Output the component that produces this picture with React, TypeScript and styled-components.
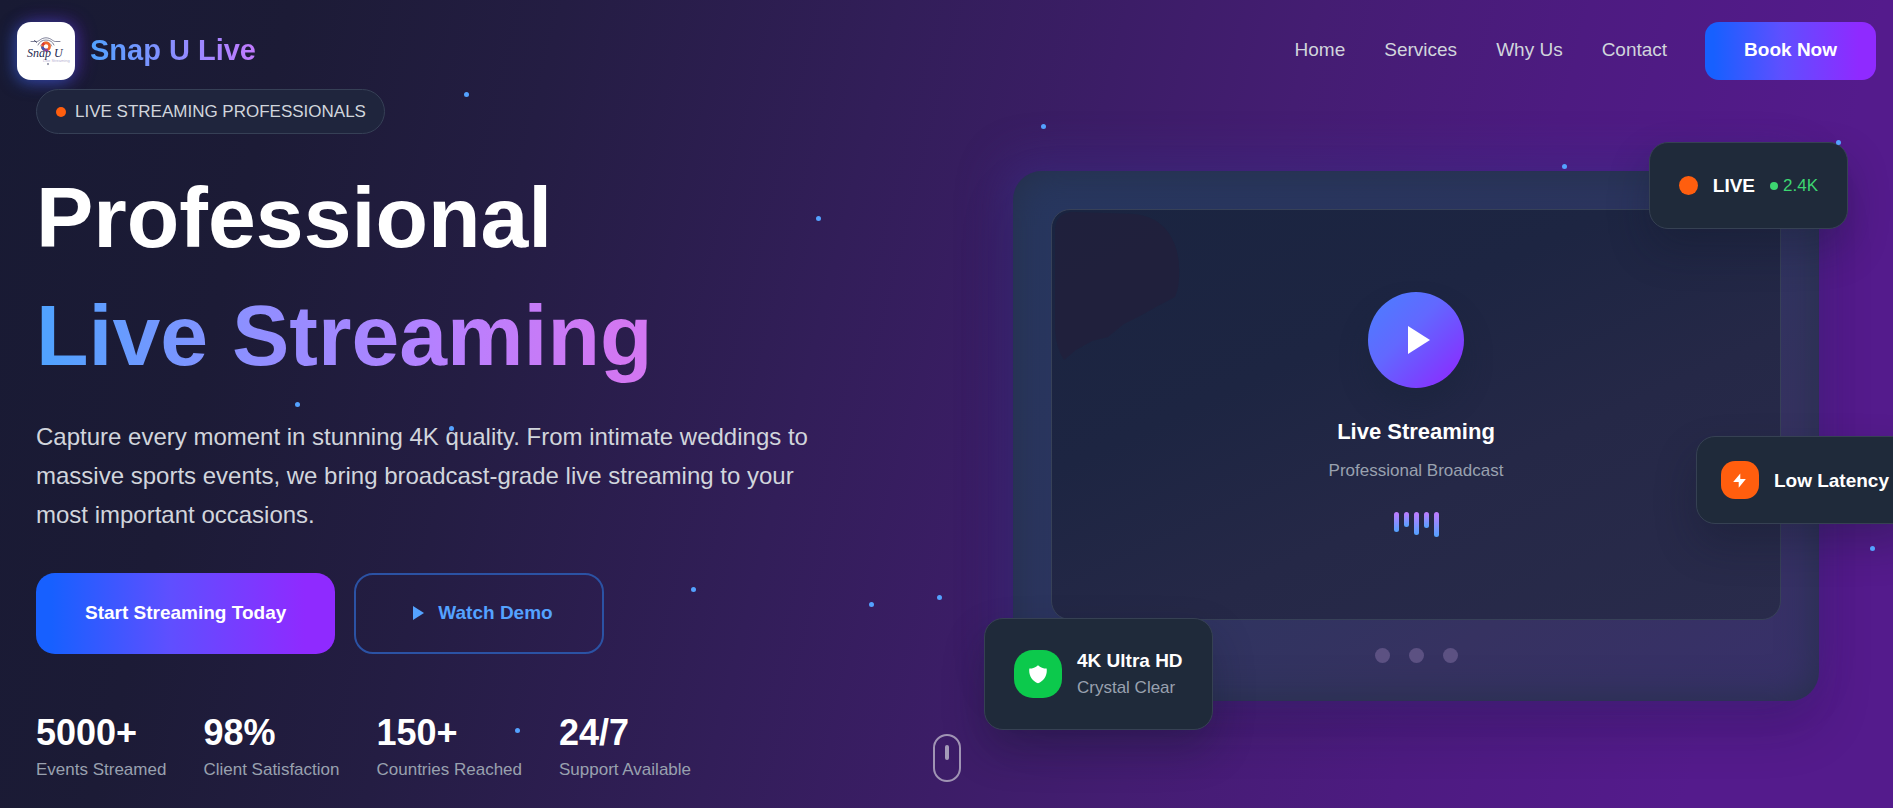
import React from 'react';
import styled, { createGlobalStyle } from 'styled-components';

const GlobalStyle = createGlobalStyle`
  * { box-sizing: border-box; }
  body {
    margin: 0;
    background: #191a32;
    color: #ffffff;
    font-family: "Liberation Sans", Arial, sans-serif;
    font-size: 19px;
    line-height: 29px;
  }
  h1, h2, p, dl, dd, dt, ul { margin: 0; padding: 0; }
  button { font: inherit; cursor: pointer; }
`;

const blueToPurple = 'linear-gradient(90deg, #1760ff 5%, #5f4fff 45%, #8f2aff 90%)';

const Page = styled.div`
  position: relative;
  display: flex;
  flex-direction: column;
  min-height: 100vh;
  overflow: hidden;
  background: linear-gradient(
    104deg,
    #181a33 0%,
    #1c1b36 14%,
    #241d43 27%,
    #321e59 43%,
    #3c1d67 54%,
    #441d72 63%,
    #4d1b81 76%,
    #541b8c 90%
  );
`;

const Header = styled.header`
  display: flex;
  align-items: center;
  justify-content: space-between;
  padding: 22px 17px 9px;
`;

const Brand = styled.a`
  display: flex;
  align-items: center;
  gap: 15px;
  text-decoration: none;
`;

const LogoTile = styled.span`
  display: block;
  width: 58px;
  height: 58px;
  border-radius: 14px;
  background: #ffffff;
  box-shadow:
    -3px 3px 16px rgba(43, 110, 220, 0.5),
    4px -1px 18px rgba(110, 30, 200, 0.45);
`;

const BrandName = styled.span`
  padding-bottom: 3px;
  font-size: 29px;
  line-height: 38px;
  font-weight: 700;
  color: transparent;
  background: linear-gradient(90deg, #51a2ff, #c27aff);
  background-clip: text;
`;

const Nav = styled.nav`
  display: flex;
  align-items: center;
  gap: 39px;
`;

const NavLink = styled.a`
  padding-bottom: 3px;
  color: #d1d5dc;
  text-decoration: none;
`;

const BookButton = styled.button`
  height: 58px;
  margin-left: -1px;
  padding: 0 39px 3px;
  border: 0;
  border-radius: 14px;
  color: #ffffff;
  font-weight: 700;
  background: ${blueToPurple};
`;

const Hero = styled.main`
  flex: 1;
  display: grid;
  grid-template-columns: minmax(0, 1fr) minmax(0, 1fr);
  align-items: center;
  gap: 77px;
  padding: 0 36px 22px;
`;

const Intro = styled.section`
  display: flex;
  flex-direction: column;
  align-items: flex-start;
`;

const Badge = styled.p`
  display: flex;
  align-items: center;
  gap: 9px;
  height: 45px;
  padding: 0 18px 0 19px;
  border: 1px solid #364056;
  border-radius: 23px;
  background: #1f253d;
  color: #d1d5dc;
  font-size: 17px;
`;

const Dot = styled.span<{ $size: number; $color: string }>`
  flex: none;
  width: ${(p) => p.$size}px;
  height: ${(p) => p.$size}px;
  border-radius: 50%;
  background: ${(p) => p.$color};
`;

const Title = styled.h1`
  display: flex;
  flex-direction: column;
  align-items: flex-start;
  margin-top: 24px;
  font-size: 86px;
  line-height: 118px;
  font-weight: 700;
`;

const TitleAccent = styled.span`
  color: transparent;
  background: linear-gradient(90deg, #51a2ff 2%, #8f8fff 35%, #b780ff 66%, #d277f2 94%);
  background-clip: text;
`;

const Lead = styled.p`
  max-width: 806px;
  margin-top: 23px;
  color: #d1d5dc;
  font-size: 24px;
  line-height: 39px;
`;

const Actions = styled.div`
  display: flex;
  gap: 19px;
  margin-top: 39px;
`;

const ActionButton = styled.button<{ $outline?: boolean }>`
  display: flex;
  align-items: center;
  gap: 9px;
  height: 81px;
  padding: 0 49px 2px;
  border: ${(p) => (p.$outline ? '2px solid #2b52a4' : '0')};
  border-radius: 19px;
  color: ${(p) => (p.$outline ? '#54a2ff' : '#ffffff')};
  background: ${(p) => (p.$outline ? 'transparent' : blueToPurple)};
  font-weight: 700;
`;

const Stats = styled.dl`
  display: flex;
  gap: 37px;
  margin-top: 57px;
`;

const Stat = styled.div`
  display: flex;
  flex-direction: column-reverse;
`;

const StatValue = styled.dd`
  font-size: 36px;
  line-height: 43px;
  font-weight: 700;
`;

const StatLabel = styled.dt`
  color: #99a1af;
  font-size: 17px;
  line-height: 32px;
`;

const Stage = styled.section`
  padding: 0 38px 3px 28px;
`;

const Device = styled.div`
  position: relative;
  padding: 38px;
  border-radius: 29px;
  background: linear-gradient(145deg, #27375f 0%, #2c355f 42%, #363261 72%, #38306a 100%);
  box-shadow:
    inset 0 0 38px #253049,
    -12px -12px 44px rgba(60, 52, 145, 0.4),
    0 26px 52px rgba(20, 20, 40, 0.22);
`;

const Screen = styled.div`
  position: relative;
  display: flex;
  flex-direction: column;
  align-items: center;
  justify-content: center;
  aspect-ratio: 16 / 9;
  border: 1px solid #374158;
  border-radius: 19px;
  overflow: hidden;
  background: linear-gradient(155deg, #1a2440 0%, #1d2542 35%, #252847 62%, #292b4b 100%);
`;

const Tint = styled.svg`
  position: absolute;
  top: 0;
  left: 0;
`;

const PlayButton = styled.button`
  display: grid;
  place-items: center;
  width: 96px;
  height: 96px;
  padding: 0;
  border: 0;
  border-radius: 50%;
  color: #ffffff;
  background: linear-gradient(135deg, #4f7aff 10%, #6268ff 42%, #7549ff 68%, #8c2cff 92%);
  box-shadow: 0 18px 28px rgba(25, 35, 58, 0.45);
`;

const ScreenTitle = styled.h2`
  margin-top: 29px;
  font-size: 22px;
  line-height: 30px;
  font-weight: 700;
`;

const ScreenText = styled.p`
  margin-top: 10px;
  color: #99a1af;
  font-size: 17px;
  line-height: 27px;
`;

const Equalizer = styled.div`
  display: flex;
  align-items: flex-start;
  gap: 5px;
  height: 25px;
  margin-top: 28px;
`;

const Bar = styled.span<{ $height: number }>`
  width: 5px;
  height: ${(p) => p.$height}px;
  border-radius: 3px;
  background: linear-gradient(0deg, #51a2ff, #c27aff);
`;

const DeviceDots = styled.div`
  display: flex;
  justify-content: center;
  gap: 19px;
  margin-top: 28px;
`;

const FloatingCard = styled.div<{ $padding: string }>`
  position: absolute;
  display: flex;
  align-items: center;
  gap: 15px;
  padding: ${(p) => p.$padding};
  border: 1px solid #364153;
  border-radius: 19px;
  background: #1f2a3a;
  white-space: nowrap;
  box-shadow: 0 20px 40px rgba(16, 24, 40, 0.3);
`;

const LiveCard = styled(FloatingCard)`
  top: -29px;
  right: -29px;
`;

const LatencyCard = styled(FloatingCard)`
  top: 50%;
  right: -95px;
`;

const QualityCard = styled(FloatingCard)`
  bottom: -29px;
  left: -29px;
`;

const IconTile = styled.span<{ $size: number; $radius: number; $color: string }>`
  display: grid;
  place-items: center;
  flex: none;
  width: ${(p) => p.$size}px;
  height: ${(p) => p.$size}px;
  border-radius: ${(p) => p.$radius}px;
  background: ${(p) => p.$color};
  color: #ffffff;
`;

const Viewers = styled.span`
  display: flex;
  align-items: center;
  gap: 5px;
  color: #3dd671;
  font-size: 17px;
`;

const CardTitle = styled.strong`
  display: block;
  line-height: 27px;
`;

const CardText = styled.span`
  display: block;
  color: #99a1af;
  font-size: 17px;
  line-height: 27px;
`;

const ScrollCue = styled.div`
  position: absolute;
  left: 50%;
  bottom: 26px;
  width: 28px;
  height: 48px;
  margin-left: -14px;
  padding-top: 9px;
  border: 2px solid #a094b4;
  border-radius: 14px;
  &::before {
    content: '';
    display: block;
    width: 4px;
    height: 15px;
    margin: 0 auto;
    border-radius: 2px;
    background: #a49bb8;
  }
`;

const Particle = styled.span`
  position: absolute;
  width: 5px;
  height: 5px;
  border-radius: 50%;
  background: #54a2ff;
  pointer-events: none;
`;

const particles: Array<[number, number]> = [
  [24.5, 11.4],
  [55, 15.3],
  [82.5, 20.3],
  [97, 17.3],
  [43.1, 26.7],
  [15.6, 49.7],
  [23.7, 52.7],
  [36.5, 72.6],
  [45.9, 74.5],
  [49.5, 73.7],
  [27.2, 90.1],
  [98.8, 67.6],
];

const stats = [
  { value: '5000+', label: 'Events Streamed' },
  { value: '98%', label: 'Client Satisfaction' },
  { value: '150+', label: 'Countries Reached' },
  { value: '24/7', label: 'Support Available' },
];

const bars = [20, 15, 23, 16, 25];
const links = ['Home', 'Services', 'Why Us', 'Contact'];

const PlayIcon = ({ size }: { size: number }) => (
  <svg width={size} height={size} viewBox="0 0 24 24" fill="currentColor" aria-hidden="true">
    <path d="M8 5v14l11-7z" />
  </svg>
);

const Logo = () => (
  <svg width="58" height="58" viewBox="0 0 58 58" aria-hidden="true">
    <g fill="none" stroke="#2c2f55" strokeLinecap="round">
      <path d="M14 19.500h5.500c3 0 4-3.500 9.500-3.700 5.500.2 6.500 3.700 9.500 3.700H43" strokeWidth="0.6" />
      <path d="M21 23a8.500 7.500 0 0 1 16 0" strokeWidth="0.6" />
      <path d="M23.500 24a6 6 0 0 1 11.200 0" strokeWidth="0.500" />
      <path d="M17.500 18.300l2 2.200" strokeWidth="0.8" />
    </g>
    <circle cx="29" cy="24.500" r="3.600" fill="none" stroke="#f0662a" strokeWidth="2.600" />
    <path d="M25.400 24.500a3.600 3.600 0 0 0 2.200 3.300" fill="none" stroke="#3d56b5" strokeWidth="2.600" />
    <path d="M27.600 27.800a3.600 3.600 0 0 0 3.200-.2" fill="none" stroke="#8a3fa0" strokeWidth="2.600" />
    <path d="M25.700 23a3.600 3.600 0 0 1 1.600-1.700" fill="none" stroke="#d8363c" strokeWidth="2.600" />
    <text x="10" y="35" fontFamily="Liberation Serif, serif" fontStyle="italic" fontSize="12" fill="#24284f">
      Snap U
    </text>
    <text x="26" y="40" fontFamily="Liberation Sans, sans-serif" fontSize="4" fill="#b9b4d4">
      Live Streaming
    </text>
    <path d="M30 41.500h2l-1 1.800z" fill="#24284f" />
  </svg>
);

export default function App() {
  return (
    <>
      <GlobalStyle />
      <Page>
        <Header>
          <Brand href="#home">
            <LogoTile>
              <Logo />
            </LogoTile>
            <BrandName>Snap U Live</BrandName>
          </Brand>
          <Nav>
            {links.map((name) => (
              <NavLink key={name} href={`#${name.toLowerCase().replace(' ', '-')}`}>
                {name}
              </NavLink>
            ))}
            <BookButton type="button">Book Now</BookButton>
          </Nav>
        </Header>

        <Hero>
          <Intro>
            <Badge>
              <Dot $size={10} $color="#ff5e0e" />
              LIVE STREAMING PROFESSIONALS
            </Badge>
            <Title>
              <span>Professional</span>
              <TitleAccent>Live Streaming</TitleAccent>
            </Title>
            <Lead>
              Capture every moment in stunning 4K quality. From intimate weddings to massive sports
              events, we bring broadcast-grade live streaming to your most important occasions.
            </Lead>
            <Actions>
              <ActionButton type="button">Start Streaming Today</ActionButton>
              <ActionButton type="button" $outline>
                <PlayIcon size={24} />
                Watch Demo
              </ActionButton>
            </Actions>
            <Stats>
              {stats.map((s) => (
                <Stat key={s.label}>
                  <StatLabel>{s.label}</StatLabel>
                  <StatValue>{s.value}</StatValue>
                </Stat>
              ))}
            </Stats>
          </Intro>

          <Stage>
            <Device>
              <Screen>
                <Tint width="130" height="155" viewBox="0 0 130 155" aria-hidden="true">
                  <path
                    d="M3 18Q5 2 22 2L82 4Q104 6 116 22 127 38 127 58 128 76 123 87L104 97 88 106 72 114 56 127 40 131 24 140 12 150Q4 138 3 120z"
                    fill="#251d38"
                    opacity="0.55"
                  />
                </Tint>
                <PlayButton type="button" aria-label="Play">
                  <PlayIcon size={48} />
                </PlayButton>
                <ScreenTitle>Live Streaming</ScreenTitle>
                <ScreenText>Professional Broadcast</ScreenText>
                <Equalizer>
                  {bars.map((h) => (
                    <Bar key={h} $height={h} />
                  ))}
                </Equalizer>
              </Screen>
              <DeviceDots>
                <Dot $size={15} $color="#5c5182" />
                <Dot $size={15} $color="#5c5182" />
                <Dot $size={15} $color="#5c5182" />
              </DeviceDots>

              <LiveCard $padding="28px 29px">
                <Dot $size={19} $color="#ff5e0e" />
                <strong>LIVE</strong>
                <Viewers>
                  <Dot $size={8} $color="#3dd671" />
                  2.4K
                </Viewers>
              </LiveCard>
              <LatencyCard $padding="24px">
                <IconTile $size={38} $radius={14} $color="#ff5e0e">
                  <svg width="19" height="19" viewBox="0 0 24 24" fill="currentColor" aria-hidden="true">
                    <path d="M13 10V3L4 14h7v7l9-11h-7z" />
                  </svg>
                </IconTile>
                <strong>Low Latency</strong>
              </LatencyCard>
              <QualityCard $padding="28px 29px">
                <IconTile $size={48} $radius={19} $color="#0cc94c">
                  <svg width="22" height="22" viewBox="0 0 20 20" fill="currentColor" aria-hidden="true">
                    <path d="M2.166 4.999A11.954 11.954 0 0010 1.944 11.954 11.954 0 0017.834 5c.11.65.166 1.32.166 2.001 0 5.225-3.340 9.670-8 11.317C5.340 16.670 2 12.225 2 7c0-.682.057-1.350.166-2.001z" />
                  </svg>
                </IconTile>
                <div>
                  <CardTitle>4K Ultra HD</CardTitle>
                  <CardText>Crystal Clear</CardText>
                </div>
              </QualityCard>
            </Device>
          </Stage>
        </Hero>

        <ScrollCue />
        {particles.map(([x, y]) => (
          <Particle key={`${x}-${y}`} style={{ left: `${x}%`, top: `${y}%` }} />
        ))}
      </Page>
    </>
  );
}
